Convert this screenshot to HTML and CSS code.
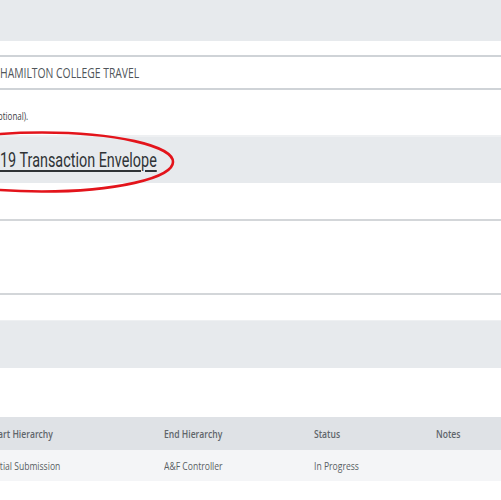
FILE: index.html
```html
<!DOCTYPE html>
<html>
<head>
<meta charset="utf-8">
<link rel="stylesheet" href="styles.css">
</head>
<body>
<div class="page">
  <div class="band band-top"></div>
  <div class="field">
    <span class="sq sq-field">HAMILTON COLLEGE TRAVEL</span>
  </div>
  <div class="hint"><span class="sq sq-hint">optional).</span></div>
  <div class="link-band">
    <a class="sq sq-link" href="#">19 Transaction Envelope</a>
  </div>
  <div class="box"></div>
  <div class="band band-mid"></div>
  <div class="table">
    <div class="row head">
      <div class="cell"><span class="sq sq-cell">Start Hierarchy</span></div>
      <div class="cell"><span class="sq sq-cell">End Hierarchy</span></div>
      <div class="cell"><span class="sq sq-cell">Status</span></div>
      <div class="cell"><span class="sq sq-cell">Notes</span></div>
    </div>
    <div class="row body">
      <div class="cell"><span class="sq sq-cell">Initial Submission</span></div>
      <div class="cell"><span class="sq sq-cell">A&amp;F Controller</span></div>
      <div class="cell"><span class="sq sq-cell">In Progress</span></div>
      <div class="cell"></div>
    </div>
  </div>
  <svg class="circle" width="220" height="70" viewBox="0 0 220 70">
    <ellipse cx="42" cy="32" rx="131" ry="29.5" fill="none" stroke="#e3141b" stroke-width="2.6"/>
  </svg>
</div>
</body>
</html>
```
FILE: styles.css
```css
html, body {
  margin: 0;
  padding: 0;
  background: #ffffff;
}
.page {
  position: relative;
  width: 501px;
  height: 500px;
  overflow: hidden;
  font-family: "Open Sans", "Liberation Sans", sans-serif;
  color: #555a5f;
}
.sq {
  display: inline-block;
  transform-origin: left center;
  white-space: nowrap;
}
.band {
  background: #e7eaed;
}
.band-top {
  height: 41px;
  margin-bottom: 14px;
}
.field {
  height: 31px;
  border-top: 2px solid #cfd3d7;
  border-bottom: 2px solid #cfd3d7;
  display: flex;
  align-items: center;
}
.sq-field {
  font-size: 14px;
  color: #50555a;
  transform: scaleX(0.74);
}
.hint {
  height: 45px;
  display: flex;
  align-items: center;
  padding-top: 7px;
  box-sizing: border-box;
  margin-left: -7px;
}
.sq-hint {
  font-size: 10px;
  color: #3c4044;
  transform: scaleX(0.8);
}
.link-band {
  height: 46px;
  border-top: 2px solid #eef0f2;
  background: #e7eaed;
  display: flex;
  align-items: center;
}
.sq-link {
  font-family: Roboto, "Liberation Sans", sans-serif;
  font-size: 20px;
  color: #2f3336;
  text-decoration: underline;
  text-underline-offset: 3px;
  transform: scaleX(0.72);
}
.box {
  margin-top: 36px;
  height: 72px;
  border-top: 2px solid #d3d6d9;
  border-bottom: 2px solid #d3d6d9;
  margin-bottom: 25px;
}
.band-mid {
  height: 47px;
  border-top: 1px solid #eef0f2;
}
.table {
  margin-top: 49px;
  margin-left: -10px;
}
.row {
  display: grid;
  grid-template-columns: 174px 150px 122px 1fr;
  align-items: center;
  box-sizing: border-box;
  padding-bottom: 3px;
}
.row.head {
  height: 33px;
  background: #dfe2e6;
  font-weight: 600;
}
.row.body {
  height: 31px;
  background: #f4f5f7;
}
.sq-cell {
  font-size: 11px;
  color: #5a5f64;
  transform: scaleX(0.78);
}
.head .sq-cell {
  color: #60656a;
}
.circle {
  position: absolute;
  left: 0;
  top: 130px;
}
```
